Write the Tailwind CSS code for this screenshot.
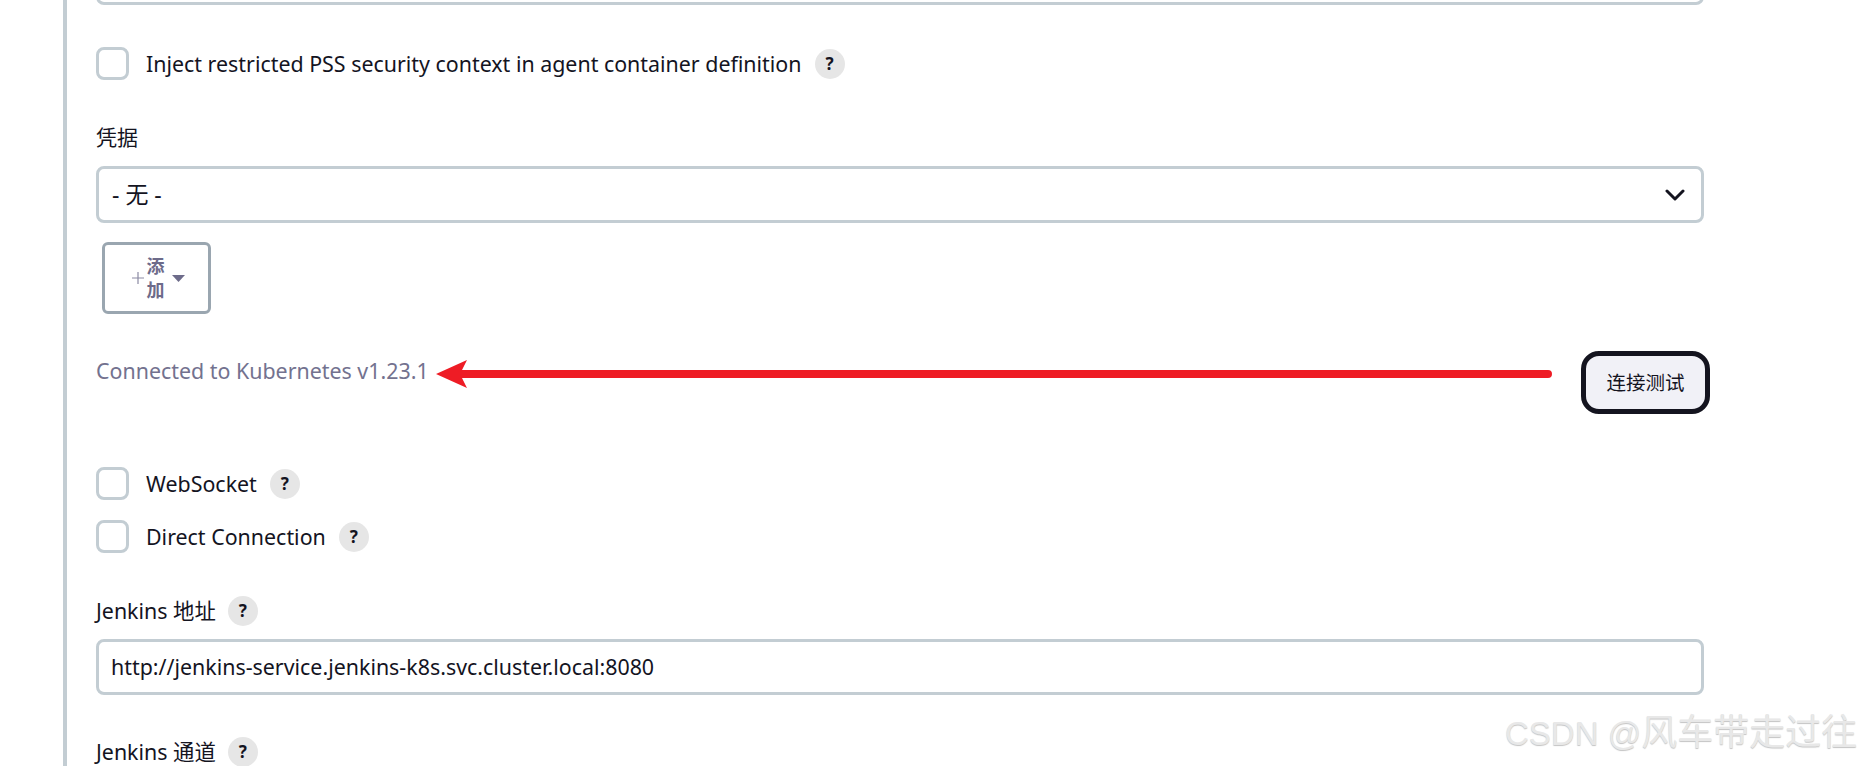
<!DOCTYPE html>
<html lang="en">
  <head>
    <meta charset="UTF-8" />
    <meta name="viewport" content="width=device-width, initial-scale=1.0" />
    <title>Kubernetes cloud</title>
    <script src="https://cdn.jsdelivr.net/npm/@tailwindcss/browser@4"></script>
  </head>
  <body>
    <div class="relative h-[766px] w-full overflow-hidden bg-white text-[#14141f] text-[21.4px] font-['Noto_Sans','Noto_Sans_CJK_SC',sans-serif]">
      <div class="ml-[63px] w-[1647px] h-full border-l-[4px] border-[#c3cdd3] pl-[29px]">
        <div class="w-[1608px] h-full flex flex-col">
          <div class="-mt-[51px] h-[56px] shrink-0 rounded-[8px] border-[3px] border-[#c3cdd3]"></div>

          <div class="mt-[42px] h-[33px] flex items-center shrink-0">
            <div class="w-[33px] h-[33px] rounded-[8px] border-[3px] border-[#c3cdd3]"></div>
            <span class="ml-[17px] leading-none">Inject restricted PSS security context in agent container definition</span>
            <span class="ml-[13px] w-[30px] h-[30px] rounded-full bg-[#e6e6e6] flex items-center justify-center text-[17px] font-bold">?</span>
          </div>

          <div class="mt-[45px] h-[24px] leading-[24px] shrink-0 text-[21px]">凭据</div>
          <div class="mt-[17px] h-[57px] shrink-0 rounded-[8px] border-[3px] border-[#c3cdd3] pl-[13px] pr-[16px] flex items-center justify-between">
            <span class="text-[23px]">- 无 -</span>
            <svg width="20" height="12" viewBox="0 0 20 12" fill="none" stroke="#14141f" stroke-width="3" stroke-linecap="round" stroke-linejoin="round"><path d="M2 2l8 8 8-8" /></svg>
          </div>

          <div class="mt-[19px] ml-[6px] w-[109px] h-[72px] shrink-0 rounded-[6px] border-[3px] border-[#9aa6b0] pl-[3px] flex items-center justify-center gap-[3px] text-[#6d6b8a]">
            <svg width="12" height="12" viewBox="0 0 12 12" stroke="#8b8aa3" stroke-width="1.2"><path d="M6 0v12M0 6h12" /></svg>
            <span class="w-[18px] text-[18px] leading-[24px] font-bold text-center">添加</span>
            <svg class="ml-[4px]" width="13" height="7" viewBox="0 0 13 7" fill="#6d6b8a"><path d="M0 0h13L6.5 7z" /></svg>
          </div>

          <div class="mt-[37px] h-[63px] shrink-0 flex items-start justify-between -mr-[6px]">
            <span class="mt-[6px] leading-[28px] text-[#73728f]">Connected to Kubernetes v1.23.1</span>
            <button class="w-[129px] h-[63px] rounded-[18px] border-[5px] border-[#14141f] bg-[#f1f1f7] text-[19.5px]">连接测试</button>
          </div>

          <div class="mt-[53px] h-[33px] flex items-center shrink-0">
            <div class="w-[33px] h-[33px] rounded-[8px] border-[3px] border-[#c3cdd3]"></div>
            <span class="ml-[17px] leading-none">WebSocket</span>
            <span class="ml-[13px] w-[30px] h-[30px] rounded-full bg-[#e6e6e6] flex items-center justify-center text-[17px] font-bold">?</span>
          </div>
          <div class="mt-[20px] h-[33px] flex items-center shrink-0">
            <div class="w-[33px] h-[33px] rounded-[8px] border-[3px] border-[#c3cdd3]"></div>
            <span class="ml-[17px] leading-none">Direct Connection</span>
            <span class="ml-[13px] w-[30px] h-[30px] rounded-full bg-[#e6e6e6] flex items-center justify-center text-[17px] font-bold">?</span>
          </div>

          <div class="mt-[43px] h-[30px] flex items-center shrink-0">
            <span class="leading-none">Jenkins 地址</span>
            <span class="ml-[12px] w-[30px] h-[30px] rounded-full bg-[#e6e6e6] flex items-center justify-center text-[17px] font-bold">?</span>
          </div>
          <div class="mt-[13px] h-[56px] shrink-0 rounded-[8px] border-[3px] border-[#c3cdd3] pl-[12px] flex items-center">http://jenkins-service.jenkins-k8s.svc.cluster.local:8080</div>

          <div class="mt-[42px] h-[30px] flex items-center shrink-0">
            <span class="leading-none">Jenkins 通道</span>
            <span class="ml-[12px] w-[30px] h-[30px] rounded-full bg-[#e6e6e6] flex items-center justify-center text-[17px] font-bold">?</span>
          </div>
        </div>
      </div>

      <!-- red annotation arrow -->
      <svg class="absolute left-[430px] top-[350px]" width="1130" height="50" viewBox="0 0 1130 50" fill="#ee1c25">
        <path d="M6 24 L37 10 L32 20 H1118 a4 4 0 0 1 0 8 H32 L37 38 Z" />
      </svg>

      <!-- watermark -->
      <div class="absolute left-[1505px] top-[711px] whitespace-nowrap text-[33px] leading-[44px] text-[#e8e8e8] [text-shadow:0_1px_1px_#c4c4c4] font-['Liberation_Sans','Noto_Sans_CJK_SC',sans-serif]">CSDN @<span class="text-[36px]">风车带走过往</span></div>
    </div>
  </body>
</html>
